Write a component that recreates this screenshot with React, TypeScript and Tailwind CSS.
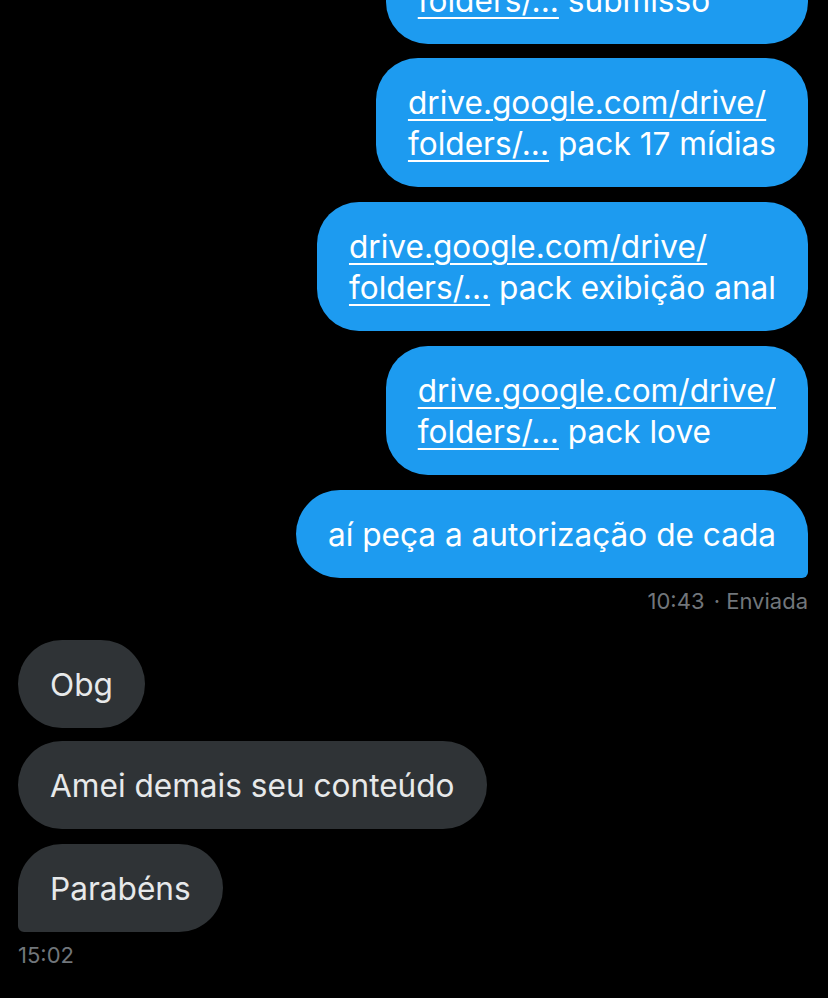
const font = { fontFamily: 'Inter, "Noto Sans", sans-serif' };

function Link({ children }: { children: React.ReactNode }) {
  return <span className="underline decoration-2 underline-offset-[5px]">{children}</span>;
}

function Sent({ children, last = false, className = '' }: { children: React.ReactNode; last?: boolean; className?: string }) {
  return (
    <div
      className={`self-end bg-[#1d9bf0] text-white px-[32px] py-[23.5px] leading-[41px] text-[31.6px] ${
        last ? 'rounded-[44px] rounded-br-[6px]' : 'rounded-[42px]'
      } ${className}`}
    >
      {children}
    </div>
  );
}

function Received({ children, last = false, className = '' }: { children: React.ReactNode; last?: boolean; className?: string }) {
  return (
    <div
      className={`self-start bg-[#2f3336] text-[#e7e9ea] px-[32px] py-[23.5px] leading-[41px] text-[31.6px] ${
        last ? 'rounded-[44px] rounded-bl-[6px]' : 'rounded-[44px]'
      } ${className}`}
    >
      {children}
    </div>
  );
}

function DriveLink({ label }: { label: string }) {
  return (
    <>
      <Link>drive.google.com/drive/</Link>
      <br />
      <Link>folders/...</Link> {label}
    </>
  );
}

export default function App() {
  return (
    <div className="w-[828px] h-[998px] overflow-hidden bg-black" style={font}>
      <div className="flex flex-col pl-[18px] pr-[20px]">
        <Sent className="mt-[-85px]">
          <DriveLink label="submisso" />
        </Sent>
        <Sent className="mt-[14px]">
          <DriveLink label="pack 17 mídias" />
        </Sent>
        <Sent className="mt-[15px]">
          <DriveLink label="pack exibição anal" />
        </Sent>
        <Sent className="mt-[15px]">
          <DriveLink label="pack love" />
        </Sent>
        <Sent last className="mt-[15px]">
          aí peça a autorização de cada
        </Sent>
        <div className="self-end mt-[9px] text-[22px] leading-[28px] text-[#71767b]">
          10:43 <span className="ml-[3px]">·</span> Enviada
        </div>

        <Received className="mt-[25px]">Obg</Received>
        <Received className="mt-[13px]">Amei demais seu conteúdo</Received>
        <Received last className="mt-[15px]">
          Parabéns
        </Received>
        <div className="self-start mt-[9px] text-[22px] leading-[28px] text-[#71767b]">15:02</div>
      </div>
    </div>
  );
}
